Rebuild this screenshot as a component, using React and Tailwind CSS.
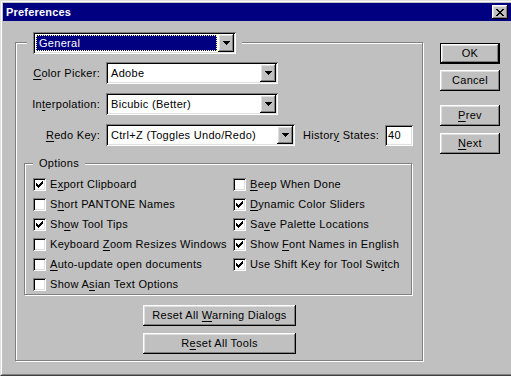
const raised =
  'shadow-[inset_-1px_-1px_0_#000,inset_1px_1px_0_#fff,inset_-2px_-2px_0_#808080,inset_2px_2px_0_#dfdfdf]'
const sunken =
  'shadow-[inset_1px_1px_0_#808080,inset_-1px_-1px_0_#fff,inset_2px_2px_0_#000,inset_-2px_-2px_0_#dfdfdf]'
const etched = 'border border-[#808080] shadow-[inset_1px_1px_0_#fff,1px_1px_0_#fff]'

function Arrow() {
  return (
    <svg width="7" height="4" viewBox="0 0 7 4" shapeRendering="crispEdges">
      <rect x="0" y="0" width="7" height="1" fill="#000" />
      <rect x="1" y="1" width="5" height="1" fill="#000" />
      <rect x="2" y="2" width="3" height="1" fill="#000" />
      <rect x="3" y="3" width="1" height="1" fill="#000" />
    </svg>
  )
}

function Check() {
  // 7x7 pixel check mark, like the old windows one
  const px = [
    [6, 0], [5, 1], [6, 1], [0, 2], [4, 2], [5, 2], [6, 2],
    [0, 3], [1, 3], [3, 3], [4, 3], [5, 3], [0, 4], [1, 4], [2, 4], [3, 4], [4, 4],
    [1, 5], [2, 5], [3, 5], [2, 6],
  ]
  return (
    <svg width="7" height="7" viewBox="0 0 7 7" shapeRendering="crispEdges">
      {px.map(([x, y]) => <rect key={`${x}-${y}`} x={x} y={y} width="1" height="1" fill="#000" />)}
    </svg>
  )
}

function Combo({ className, children, selected }) {
  return (
    <div className={`${sunken} ${className} bg-white h-[22px] flex items-stretch p-[2px]`}>
      {selected ? (
        <div className="flex-1 m-[1px] bg-[#000080] border border-dotted border-[#ffffa0] text-white pl-[2px] flex items-center">
          <span>{children}</span>
        </div>
      ) : (
        <div className="flex-1 pl-[3px] flex items-center whitespace-nowrap">
          <span>{children}</span>
        </div>
      )}
      <div className={`${raised} bg-[#c0c0c0] w-[16px] flex items-center justify-center`}>
        <Arrow />
      </div>
    </div>
  )
}

function Button({ className = '', children, isDefault }) {
  return (
    <div className={`${className} ${isDefault ? 'border border-black' : ''} h-[21px]`}>
      <div className={`${raised} bg-[#c0c0c0] h-full flex items-center justify-center whitespace-nowrap`}>
        <span>{children}</span>
      </div>
    </div>
  )
}

function CheckRow({ checked, children }) {
  return (
    <div className="h-[20px] flex items-center gap-[4px] whitespace-nowrap">
      <div className={`${sunken} bg-white w-[13px] h-[13px] flex items-center justify-center shrink-0`}>
        {checked && <Check />}
      </div>
      <span>{children}</span>
    </div>
  )
}

const U = ({ children }) => <span className="underline underline-offset-[2px]">{children}</span>

export default function App() {
  return (
    <div className="w-[511px] h-[376px] overflow-hidden bg-[#c0c0c0] border-t border-l border-b border-t-[#dfdfdf] border-l-[#dfdfdf] border-b-[#404040] font-['Liberation_Sans',Arial,sans-serif] text-[11px] leading-[13px] tracking-[0.3px] text-black">
      <div className="h-full border-t border-l border-b border-t-white border-l-white border-b-[#808080] pt-[1px] pl-[1px]">
        <div className="h-[18px] bg-[#000080] flex items-center justify-between pl-[3px] pr-[3px]">
          <span className="text-white font-bold tracking-[0.2px]">Preferences</span>
          <div className={`${raised} bg-[#c0c0c0] w-[16px] h-[14px] flex items-center justify-center`}>
            <svg width="8" height="7" viewBox="0 0 8 7" shapeRendering="crispEdges">
              <path d="M0 0h2v1h-2zM6 0h2v1h-2zM1 1h2v1h-2zM5 1h2v1h-2zM2 2h4v1h-4zM3 3h2v1h-2zM2 4h4v1h-4zM1 5h2v1h-2zM5 5h2v1h-2zM0 6h2v1h-2zM6 6h2v1h-2z" fill="#000" />
            </svg>
          </div>
        </div>

        <div className="flex">
          {/* main group */}
          <div className={`${etched} ml-[12px] mt-[21px] w-[408px] h-[319px] flex flex-col`}>
            <div className="-mt-[11px] ml-[11px] px-[6px] bg-[#c0c0c0] self-start">
              <Combo className="w-[203px] h-[21px]" selected>General</Combo>
            </div>

            <div className="mt-[8px] flex items-center">
              <div className="w-[84px] mr-[6px] text-right whitespace-nowrap"><U>C</U>olor Picker:</div>
              <Combo className="w-[172px]">Adobe</Combo>
            </div>
            <div className="mt-[9px] flex items-center">
              <div className="w-[84px] mr-[6px] text-right whitespace-nowrap">In<U>t</U>erpolation:</div>
              <Combo className="w-[172px]">Bicubic (Better)</Combo>
            </div>
            <div className="mt-[9px] flex items-center">
              <div className="w-[84px] mr-[6px] text-right whitespace-nowrap"><U>R</U>edo Key:</div>
              <Combo className="w-[189px]">Ctrl+Z (Toggles Undo/Redo)</Combo>
              <div className="ml-[8px] w-[76px] mr-[6px] whitespace-nowrap">Histor<U>y</U> States:</div>
              <div className={`${sunken} bg-white w-[28px] h-[21px] pl-[3px] flex items-center`}>40</div>
            </div>

            {/* options group */}
            <div className={`${etched} ml-[8px] mt-[17px] w-[388px] h-[132px] flex flex-col`}>
              <div className="-mt-[7px] ml-[8px] px-[6px] bg-[#c0c0c0] self-start">Options</div>
              <div className="mt-[4px] ml-[8px] grid grid-cols-[200px_1fr]">
                <div className="flex flex-col">
                  <CheckRow checked>E<U>x</U>port Clipboard</CheckRow>
                  <CheckRow>S<U>h</U>ort PANTONE Names</CheckRow>
                  <CheckRow checked>Sh<U>o</U>w Tool Tips</CheckRow>
                  <CheckRow>Keyboard <U>Z</U>oom Resizes Windows</CheckRow>
                  <CheckRow><U>A</U>uto-update open documents</CheckRow>
                  <CheckRow>Show A<U>s</U>ian Text Options</CheckRow>
                </div>
                <div className="flex flex-col">
                  <CheckRow><U>B</U>eep When Done</CheckRow>
                  <CheckRow checked><U>D</U>ynamic Color Sliders</CheckRow>
                  <CheckRow checked>Sa<U>v</U>e Palette Locations</CheckRow>
                  <CheckRow checked>Show <U>F</U>ont Names in English</CheckRow>
                  <CheckRow checked>Use Shift Key for Tool Sw<U>i</U>tch</CheckRow>
                </div>
              </div>
            </div>

            <Button className="ml-[127px] mt-[10px] w-[153px]">Reset All <U>W</U>arning Dialogs</Button>
            <Button className="ml-[127px] mt-[7px] w-[153px]">R<U>e</U>set All Tools</Button>
          </div>

          {/* side buttons */}
          <div className="ml-[17px] mt-[22px] w-[60px] flex flex-col">
            <Button isDefault>OK</Button>
            <Button className="mt-[6px]">Cancel</Button>
            <Button className="mt-[14px]"><U>P</U>rev</Button>
            <Button className="mt-[7px]"><U>N</U>ext</Button>
          </div>
        </div>
      </div>
    </div>
  )
}
